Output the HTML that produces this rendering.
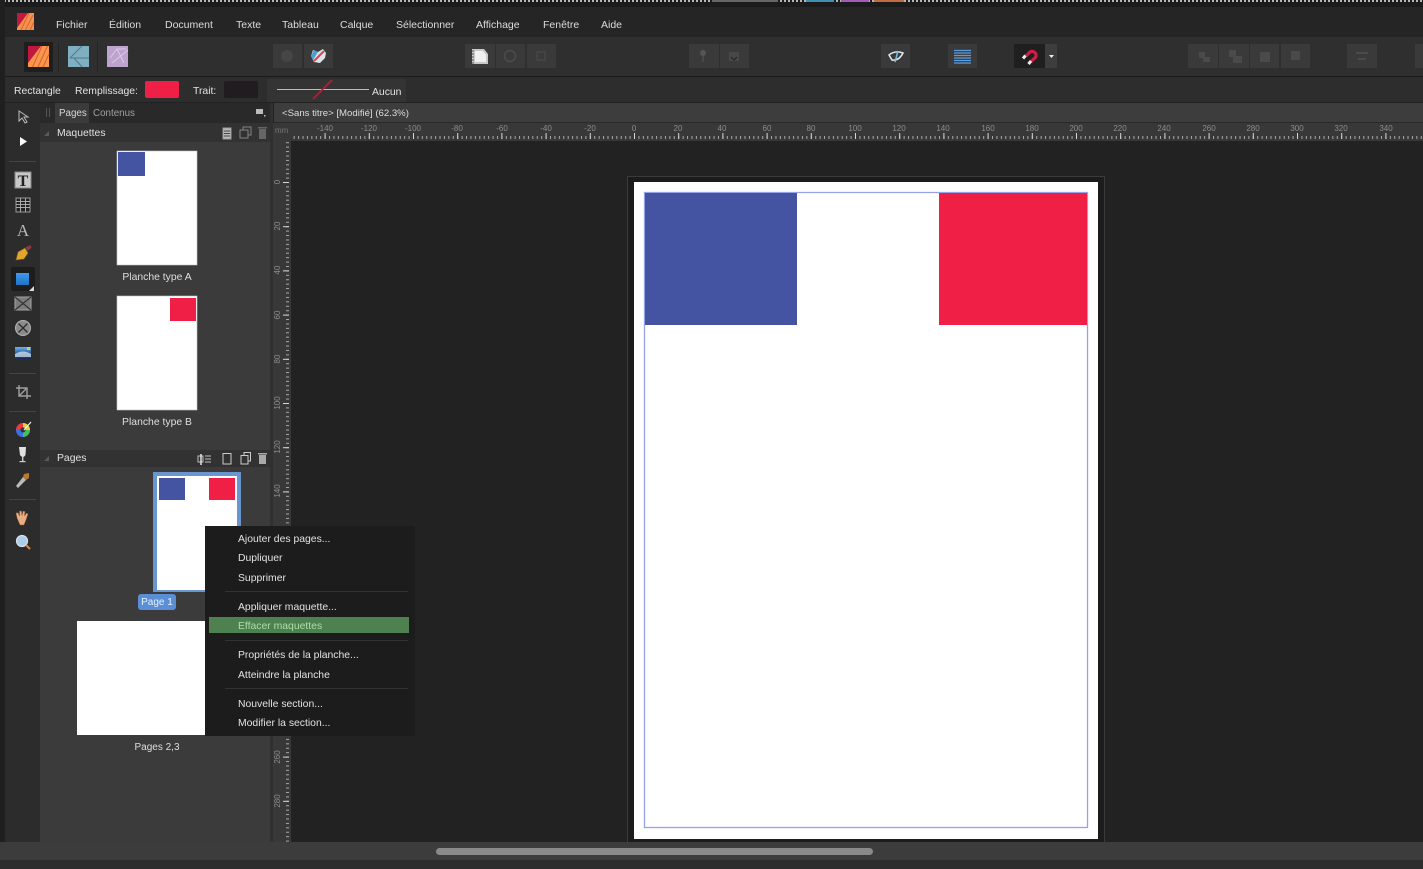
<!DOCTYPE html>
<html lang="fr"><head><meta charset="utf-8"><title>Affinity Publisher</title>
<style>
html,body{margin:0;padding:0;background:#222;width:1423px;height:869px;overflow:hidden}
svg{display:block;font-family:"Liberation Sans",sans-serif;font-size:10.4px;filter:blur(.35px)}
.m{fill:#dcdcdc;font-size:10.5px}
.c{fill:#e2e2e2;font-size:10.4px}
.r{fill:#8c8c8c;font-size:8px;text-anchor:middle}
.l{fill:#dedede;font-size:10.4px;text-anchor:middle}
.b{fill:#3a3a3a}
</style></head><body>
<svg width="1423" height="869" viewBox="0 0 1423 869" xmlns="http://www.w3.org/2000/svg">
<defs>
<pattern id="dots" x="0" y="0" width="4" height="3" patternUnits="userSpaceOnUse"><rect width="2" height="2" fill="#b5b5b5"/></pattern>
<pattern id="hminor" x="634" y="136" width="4.42" height="10" patternUnits="userSpaceOnUse"><rect x="0" y="0" width="1" height="3" fill="#a8a8a8"/></pattern>
<pattern id="vminor" x="286" y="182" width="10" height="4.42" patternUnits="userSpaceOnUse"><rect x="0" y="0" width="3" height="1" fill="#a8a8a8"/></pattern>
<pattern id="hmajor" x="634" y="133" width="44.2" height="10" patternUnits="userSpaceOnUse"><rect x="0" y="0" width="1" height="6" fill="#d8d8d8"/></pattern>
<pattern id="vmajor" x="283" y="182" width="10" height="44.2" patternUnits="userSpaceOnUse"><rect x="0" y="0" width="6" height="1" fill="#d8d8d8"/></pattern>
<linearGradient id="blue" x1="0" y1="0" x2="0" y2="1"><stop offset="0" stop-color="#3f9cf0"/><stop offset="1" stop-color="#1f72c4"/></linearGradient>
<linearGradient id="img" x1="0" y1="0" x2="0" y2="1"><stop offset="0" stop-color="#6db4ee"/><stop offset=".5" stop-color="#2d5f9f"/><stop offset="1" stop-color="#172a50"/></linearGradient>
</defs>

<!-- base -->
<rect width="1423" height="869" fill="#222"/>
<rect width="1423" height="7" fill="#1b1b1b"/>
<rect width="1423" height="2" fill="url(#dots)"/>
<rect x="806" y="0" width="28" height="2" fill="#3f8fb0"/><rect x="841" y="0" width="28" height="2" fill="#a35cb5"/><rect x="874" y="0" width="30" height="2" fill="#c06c42"/>
<rect x="712" y="0" width="66" height="2" fill="#666"/>
<rect x="0" y="7" width="1423" height="30" fill="#252525"/>
<rect x="0" y="37" width="1423" height="39" fill="#2f2f2f"/>
<rect x="0" y="76" width="1423" height="1" fill="#1a1a1a"/>
<rect x="0" y="77" width="1423" height="25" fill="#2d2d2d"/>
<rect x="0" y="0" width="5" height="869" fill="#1f1f1f"/>

<!-- menu -->
<text x="56" y="28" class="m">Fichier</text><text x="109" y="28" class="m">Édition</text><text x="165" y="28" class="m">Document</text><text x="236" y="28" class="m">Texte</text><text x="282" y="28" class="m">Tableau</text><text x="340" y="28" class="m">Calque</text><text x="396" y="28" class="m">Sélectionner</text><text x="476" y="28" class="m">Affichage</text><text x="543" y="28" class="m">Fenêtre</text><text x="601" y="28" class="m">Aide</text>
<!-- logo -->
<rect x="17" y="13" width="17" height="17" fill="#f7924a"/>
<path d="M17 13H28L17 28Z" fill="#c2183f"/>
<path d="M21 30 29 13M25.5 30 33 15M30 30 34 22" stroke="#d8643a" stroke-width="1" fill="none"/>

<!-- toolbar -->
<rect x="24" y="42" width="29" height="30" fill="#1e1e1e"/>
<rect x="28" y="46" width="21" height="21" fill="#f9984c"/>
<path d="M28 46H41L28 63Z" fill="#c2183f"/>
<path d="M32.5 67 42 46M38 67 47.5 46M43 67 49 54" stroke="#d9613a" stroke-width="1.1" fill="none"/>
<rect x="58" y="42" width="1" height="30" fill="#252525"/><rect x="97" y="42" width="1" height="30" fill="#252525"/>
<rect x="68" y="46" width="21" height="21" fill="#7fb0c2"/>
<path d="M70 58 82 46M70 58H89M74 58 82 67" stroke="#52798a" stroke-width="1" fill="none"/>
<rect x="107" y="46" width="21" height="21" fill="#bda3cd"/>
<path d="M110 58 117 49H126M117 49 124 63M128 50 112 63" stroke="#e2d4ea" stroke-width="1" fill="none" opacity=".8"/>

<rect class="b" x="273" y="44" width="29" height="24"/><rect class="b" x="304" y="44" width="29" height="24"/>
<circle cx="287" cy="56" r="6" fill="#464646"/>
<path d="M313 50 318 52 323 49 326 53 325 58 320 63 314 62 311 56Z" fill="#dce4ea"/><path d="M314 61 324 51" stroke="#e04050" stroke-width="2"/><path d="M311 56 314 50 318 52 313 60Z" fill="#4a9fd0"/>

<rect class="b" x="465" y="44" width="30" height="24"/><rect class="b" x="496" y="44" width="29" height="24"/><rect class="b" x="527" y="44" width="29" height="24"/>
<path d="M472 49H484L488 54V64H472Z" fill="#c8c8c8"/><path d="M472 51H474M472 54H474M472 57H474M472 60H474M472 63H474" stroke="#555"/><path d="M475 51H483L486 55V62H475Z" fill="#f0f0f0"/>
<circle cx="510" cy="56" r="5.5" fill="none" stroke="#4c4c4c" stroke-width="1.5"/>
<rect x="537" y="52" width="8" height="8" fill="none" stroke="#4c4c4c"/>

<rect class="b" x="689" y="44" width="30" height="24"/><rect class="b" x="720" y="44" width="29" height="24"/>
<circle cx="703" cy="53" r="3" fill="#555"/><rect x="702.5" y="55" width="1" height="7" fill="#555"/>
<rect x="729" y="52" width="10" height="9" fill="#484848"/><path d="M731 57 734 60 737 57" stroke="#222" fill="none"/>

<rect class="b" x="881" y="44" width="29" height="24"/>
<path d="M889 55Q895 50 903 53Q899 61 892 60Z" fill="none" stroke="#dfe8ee" stroke-width="1.5"/><path d="M898 51 895 62" stroke="#7db8dd" stroke-width="1.5"/>
<rect class="b" x="948" y="44" width="29" height="24"/>
<path d="M954 50.5H971M954 53H971M954 55.5H971M954 58H971M954 60.5H971M954 63H971" stroke="#5a9de0" stroke-width="1.2"/>
<rect x="1014" y="44" width="31" height="24" fill="#1f1f1f"/><rect x="1045" y="44" width="12" height="24" fill="#3d3d3d"/>
<path d="M1049 55H1054L1051.5 58Z" fill="#eee"/>
<path d="M1026 56 1030 52A4 4 0 0 1 1035.5 57.5L1031 61.5" fill="none" stroke="#d01f47" stroke-width="3.2"/>
<path d="M1023 58.5 1025.5 55.5M1028.5 64 1031 61" stroke="#eee" stroke-width="3" fill="none"/>

<g class="b"><rect x="1188" y="44" width="30" height="24"/><rect x="1219" y="44" width="30" height="24"/><rect x="1250" y="44" width="29" height="24"/><rect x="1281" y="44" width="29" height="24"/><rect x="1347" y="44" width="30" height="24"/><rect x="1415" y="44" width="8" height="24"/></g>
<g fill="#4a4a4a"><path d="M1199 52h6v5h5v5h-7v-4h-4z"/><path d="M1229 50h7v6h6v7h-9v-6h-4z"/><rect x="1260" y="52" width="10" height="10"/><rect x="1291" y="51" width="9" height="9"/><rect x="1356" y="52" width="12" height="2"/><rect x="1358" y="58" width="8" height="2"/></g>

<!-- context bar -->
<text x="14" y="94" class="c">Rectangle</text><text x="75" y="94" class="c">Remplissage:</text>
<rect x="145" y="81" width="34" height="17" rx="2" fill="#ef1f46"/>
<text x="193" y="94" class="c">Trait:</text>
<rect x="224" y="81" width="34" height="17" rx="2" fill="#211c1f"/>
<rect x="267" y="79" width="139" height="23" fill="#343434"/>
<rect x="277" y="89" width="92" height="1" fill="#bdbdbd"/>
<path d="M313 99 332 80" stroke="#b02038" stroke-width="1.6"/>
<text x="372" y="95" class="c">Aucun</text>

<!-- tool column -->
<rect x="5" y="103" width="35" height="766" fill="#2c2c2c"/>
<path d="M19 111V121L22 118 25 123 27 122 24 117H28Z" fill="#2c2c2c" stroke="#bcbcbc"/>
<path d="M20 137V146L27 141.5Z" fill="#fff"/>
<rect x="9" y="161" width="27" height="1" fill="#444"/>
<rect x="15" y="172" width="16" height="16" fill="#c8c8c8" stroke="#8a8a8a"/><text x="23" y="186" text-anchor="middle" style="font-family:'Liberation Serif',serif;font-size:16px;font-weight:bold;fill:#222">T</text>
<rect x="16" y="198" width="14" height="14" fill="#222" stroke="#999"/><path d="M16 201.5H30M16 204.5H30M16 207.5H30M20.5 198V212M25.5 198V212" stroke="#aaa"/>
<text x="23" y="236" text-anchor="middle" style="font-family:'Liberation Serif',serif;font-size:17px;fill:#b8b8b8">A</text>
<path d="M16 260 18 252 25 248 28 253 24 259Z" fill="#e2a52e" stroke="#8c5e10" stroke-width=".6"/><path d="M26 248 31 246M27 250 31 247" stroke="#8a3a45" stroke-width="2"/>
<rect x="11" y="267" width="24" height="24" rx="2" fill="#1d1d1d"/><rect x="16" y="273" width="13" height="12" fill="url(#blue)"/><path d="M29 291H34V286Z" fill="#ddd"/>
<rect x="15" y="297" width="16" height="13" fill="#7c7c7c" stroke="#a5a5a5"/><path d="M15 297 31 310M31 297 15 310" stroke="#333" stroke-width="1.2"/>
<circle cx="23" cy="328" r="7.5" fill="#8b8b8b" stroke="#b5b5b5"/><path d="M18.5 323.5 27.5 332.5M27.5 323.5 18.5 332.5" stroke="#2c2c2c" stroke-width="1.3"/>
<rect x="15" y="347" width="16" height="12" fill="url(#img)"/><path d="M15 354Q23 349 31 354V357H15Z" fill="#e0ecf5" opacity=".7"/><rect x="27" y="347" width="3" height="3" fill="#e6c64a"/>
<rect x="9" y="373" width="27" height="1" fill="#444"/>
<path d="M19 385V396H31M16 388H27V399M19 396 27 388" stroke="#a0a0a0" stroke-width="1.4" fill="none"/>
<rect x="9" y="411" width="27" height="1" fill="#444"/>
<circle cx="23" cy="430" r="7" fill="#7040c0"/><path d="M23 430 16 430A7 7 0 0 1 23 423Z" fill="#e83a3a"/><path d="M23 430 23 437A7 7 0 0 0 30 430Z" fill="#42c060"/><path d="M23 430 16 430A7 7 0 0 0 23 437Z" fill="#3a70e0"/><path d="M23 430 23 423A7 7 0 0 1 30 430Z" fill="#e8d040"/><circle cx="23" cy="430" r="2.5" fill="#333"/><path d="M24 430 31 422" stroke="#eee" stroke-width="1.2"/>
<path d="M19 447H26L25.5 455Q23 459 20 455Z" fill="#e0e0e0"/><rect x="22" y="457" width="1.4" height="5" fill="#ccc"/><rect x="19.5" y="461" width="6" height="1.2" fill="#ccc"/>
<path d="M16 486 23 477 26 480 18 488Z" fill="#bbb"/><path d="M24 474 29 473 29 478 26 480 23 477Z" fill="#b87832"/>
<rect x="9" y="499" width="27" height="1" fill="#444"/>
<path d="M17 518 16 513 18 512.5 19.5 516 19.5 511 21.5 511 22 515.5 23 511 25 511.5 24.5 516 26.5 513 28 514 26 520 24 525H20Z" fill="#e8ad80" stroke="#7a5238" stroke-width=".5"/>
<circle cx="22" cy="541" r="5.5" fill="#a9d0ea" stroke="#dde" stroke-width="1.2"/><path d="M26 545 30 549" stroke="#d08a4a" stroke-width="2"/>

<!-- panel -->
<rect x="40" y="103" width="230" height="739" fill="#3b3b3b"/>
<rect x="40" y="103" width="230" height="20" fill="#292929"/>
<rect x="46" y="108" width="1" height="9" fill="#555"/><rect x="49" y="108" width="1" height="9" fill="#555"/>
<rect x="55" y="103" width="34" height="20" fill="#3b3b3b"/>
<text x="59" y="116" style="font-size:9.8px;fill:#d8d8d8">Pages</text><text x="93" y="116" style="font-size:9.8px;fill:#a0a0a0">Contenus</text>
<rect x="256" y="109" width="7" height="5" fill="#bbb"/><rect x="264" y="115" width="1.5" height="1.5" fill="#bbb"/>
<rect x="40" y="123" width="230" height="19" fill="#323232"/>
<path d="M44 136 49 131V136Z" fill="#5a5a5a"/><text x="57" y="136" class="c">Maquettes</text>
<rect x="223" y="128" width="8" height="11" fill="#bdbdbd" stroke="#999"/><path d="M224 131H230M224 133.5H230M224 136H230" stroke="#444"/>
<path d="M240 130H248V138H240ZM243 130V127H251V135H248" fill="none" stroke="#848484"/>
<rect x="259" y="129" width="7" height="10" fill="#666"/><rect x="258" y="127" width="9" height="1.5" fill="#666"/>

<rect x="117" y="151" width="80" height="114" fill="#fff" stroke="#c4c4c4" stroke-width=".6"/><rect x="118" y="152" width="27" height="24" fill="#4553a3"/>
<text x="157" y="280" class="l">Planche type A</text>
<rect x="117" y="296" width="80" height="114" fill="#fff" stroke="#c4c4c4" stroke-width=".6"/><rect x="170" y="298" width="26" height="23" fill="#ef1f46"/>
<text x="157" y="425" class="l">Planche type B</text>

<rect x="40" y="450" width="230" height="17" fill="#323232"/>
<path d="M44 461 49 456V461Z" fill="#5a5a5a"/><text x="57" y="461" class="c">Pages</text>
<path d="M198 456H203V462H198ZM205 456H211M205 459H211M205 462H211" fill="none" stroke="#c0c0c0"/><path d="M201 454V465" stroke="#eee" stroke-width="1.4"/>
<rect x="223" y="453.5" width="8" height="10.5" fill="none" stroke="#ccc"/>
<path d="M241 455.5H248V464H241ZM244 455.5V452.5H250.5V461H248" fill="none" stroke="#ccc"/>
<rect x="259" y="455" width="7" height="9" fill="#aaa"/><rect x="258" y="453" width="9" height="1.5" fill="#aaa"/>

<rect x="153" y="472" width="88" height="120" fill="#6a96cf"/><rect x="157" y="476" width="80" height="114" fill="#fff"/>
<rect x="159" y="478" width="26" height="22" fill="#4553a3"/><rect x="209" y="478" width="26" height="22" fill="#ef1f46"/>
<rect x="138" y="594" width="38" height="16" rx="3" fill="#5a8fd8"/><text x="157" y="605" class="l" style="fill:#e8f0fa;font-size:10px">Page 1</text>
<rect x="77" y="621" width="160" height="114" fill="#fff"/>
<text x="157" y="750" class="l" style="font-size:10px">Pages 2,3</text>

<!-- title & rulers -->
<rect x="270" y="103" width="3" height="739" fill="#303030"/>
<rect x="274" y="103" width="1149" height="19" fill="#3d3d3d"/>
<rect x="273" y="122" width="1150" height="1" fill="#292929"/>
<text x="282" y="116" style="font-size:9.6px;fill:#dcdcdc">&lt;Sans titre&gt; [Modifié] (62.3%)</text>
<rect x="273" y="123" width="1150" height="18" fill="#383838"/>
<rect x="273" y="123" width="18" height="719" fill="#383838"/>
<rect x="291" y="136" width="1132" height="3" fill="url(#hminor)"/>
<rect x="291" y="133" width="1132" height="6" fill="url(#hmajor)"/>
<rect x="286" y="141" width="3" height="701" fill="url(#vminor)"/>
<rect x="283" y="141" width="6" height="701" fill="url(#vmajor)"/>
<rect x="291" y="141" width="1132" height="701" fill="#222"/>
<text x="275" y="133" style="font-size:8px;fill:#777">mm</text>
<g>
<text class="r" x="325" y="131">-140</text><text class="r" x="369" y="131">-120</text><text class="r" x="413" y="131">-100</text><text class="r" x="457" y="131">-80</text><text class="r" x="502" y="131">-60</text><text class="r" x="546" y="131">-40</text><text class="r" x="590" y="131">-20</text><text class="r" x="634" y="131">0</text><text class="r" x="678" y="131">20</text><text class="r" x="722" y="131">40</text><text class="r" x="767" y="131">60</text><text class="r" x="811" y="131">80</text><text class="r" x="855" y="131">100</text><text class="r" x="899" y="131">120</text><text class="r" x="943" y="131">140</text><text class="r" x="988" y="131">160</text><text class="r" x="1032" y="131">180</text><text class="r" x="1076" y="131">200</text><text class="r" x="1120" y="131">220</text><text class="r" x="1164" y="131">240</text><text class="r" x="1209" y="131">260</text><text class="r" x="1253" y="131">280</text><text class="r" x="1297" y="131">300</text><text class="r" x="1341" y="131">320</text><text class="r" x="1386" y="131">340</text>
</g>
<g>
<text class="r" transform="translate(280,182) rotate(-90)">0</text><text class="r" transform="translate(280,226) rotate(-90)">20</text><text class="r" transform="translate(280,270) rotate(-90)">40</text><text class="r" transform="translate(280,315) rotate(-90)">60</text><text class="r" transform="translate(280,359) rotate(-90)">80</text><text class="r" transform="translate(280,403) rotate(-90)">100</text><text class="r" transform="translate(280,447) rotate(-90)">120</text><text class="r" transform="translate(280,491) rotate(-90)">140</text><text class="r" transform="translate(280,757) rotate(-90)">260</text><text class="r" transform="translate(280,801) rotate(-90)">280</text>
</g>

<!-- page -->
<rect x="627.5" y="176.5" width="477" height="670" fill="#1c1c1c" stroke="#3a3a3a"/>
<rect x="634" y="182" width="464" height="657" fill="#fff"/>
<rect x="644.5" y="192.5" width="443" height="635" fill="none" stroke="#98a2e6" stroke-width="1.3"/>
<rect x="645" y="193" width="152" height="132" fill="#4553a3"/>
<rect x="939" y="193" width="148" height="132" fill="#ef1f46"/>

<!-- bottom -->
<rect x="0" y="842" width="1423" height="18" fill="#3c3c3c"/>
<rect x="0" y="860" width="1423" height="9" fill="#2d2d2d"/>
<rect x="436" y="848" width="437" height="7" rx="3.5" fill="#8a8a8a"/>

<!-- context menu -->
<rect x="205" y="526" width="210" height="210" fill="#1c1c1c"/>
<rect x="209" y="617" width="200" height="16" fill="#4f8050"/>
<g fill="#333"><rect x="225" y="591" width="183" height="1"/><rect x="225" y="640" width="183" height="1"/><rect x="225" y="688" width="183" height="1"/></g>
<text x="238" y="542" class="c">Ajouter des pages...</text><text x="238" y="561" class="c">Dupliquer</text><text x="238" y="581" class="c">Supprimer</text><text x="238" y="610" class="c">Appliquer maquette...</text><text x="238" y="629" style="font-size:10.4px;fill:#a8e0a8">Effacer maquettes</text><text x="238" y="658" class="c">Propriétés de la planche...</text><text x="238" y="678" class="c">Atteindre la planche</text><text x="238" y="707" class="c">Nouvelle section...</text><text x="238" y="726" class="c">Modifier la section...</text>
</svg>
</body></html>
